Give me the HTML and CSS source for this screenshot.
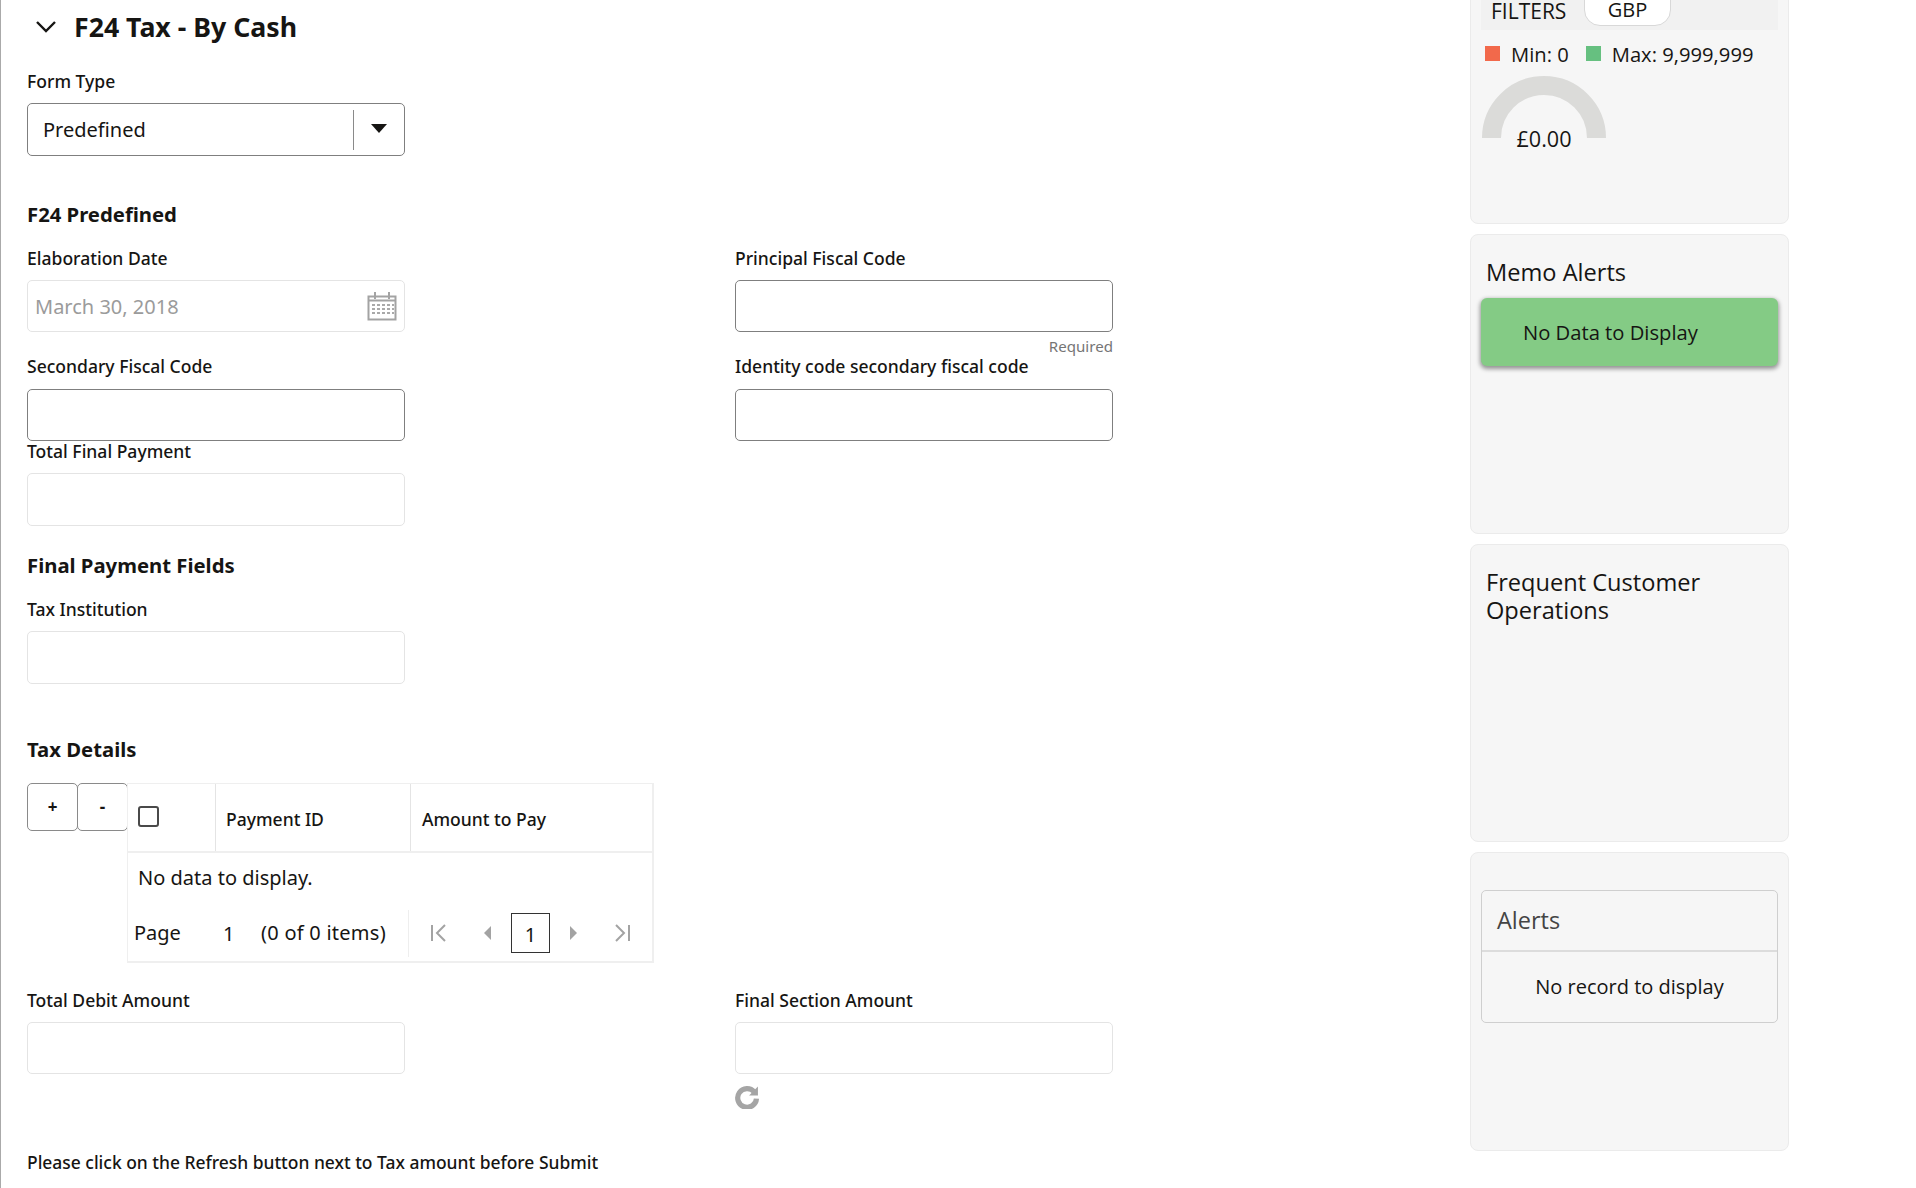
FILE: index.html
```html
<!DOCTYPE html>
<html lang="en">
<head>
<meta charset="utf-8">
<title>F24 Tax - By Cash</title>
<link rel="stylesheet" href="styles.css">
</head>
<body>
<div class="page">
  <main class="main">
    <header class="title-row">
      <svg class="chevron" viewBox="0 0 22 14"><polyline points="2,2 11,11 20,2"/></svg>
      <h1 class="title">F24 Tax - By Cash</h1>
    </header>

    <div class="field single form-type">
      <label class="label">Form Type</label>
      <div class="input tall strong select">
        <span class="select-value">Predefined</span>
        <span class="select-btn"><svg viewBox="0 0 16 9" class="caret"><polygon points="0,0 16,0 8,9"/></svg></span>
      </div>
    </div>

    <h2 class="section predefined">F24 Predefined</h2>
    <div class="grid">
      <div class="field">
        <label class="label">Elaboration Date</label>
        <div class="input soft date">
          <span class="date-value">March 30, 2018</span>
          <svg class="calendar" viewBox="0 0 30 30">
            <path class="cal-line" d="M1.5 5.5h27v23h-27z"/>
            <path class="cal-line" d="M1.5 9.5h27M8 1v7M22 1v7"/>
            <path class="cal-dots" d="M5 13h3v2H5zM10 13h3v2h-3zM15 13h3v2h-3zM20 13h3v2h-3zM25 13h2v2h-2zM5 17h3v2H5zM10 17h3v2h-3zM15 17h3v2h-3zM20 17h3v2h-3zM25 17h2v2h-2zM5 21h3v2H5zM10 21h3v2h-3zM15 21h3v2h-3zM20 21h3v2h-3zM25 21h2v2h-2z"/>
          </svg>
        </div>
      </div>
      <div class="field">
        <label class="label">Principal Fiscal Code</label>
        <div class="input strong"></div>
        <div class="required">Required</div>
      </div>
      <div class="field tight">
        <label class="label">Secondary Fiscal Code</label>
        <div class="input strong"></div>
      </div>
      <div class="field tight">
        <label class="label">Identity code secondary fiscal code</label>
        <div class="input strong"></div>
      </div>
      <div class="field">
        <label class="label">Total Final Payment</label>
        <div class="input tall soft"></div>
      </div>
    </div>

    <h2 class="section final">Final Payment Fields</h2>
    <div class="field single">
      <label class="label">Tax Institution</label>
      <div class="input tall soft"></div>
    </div>

    <h2 class="section details">Tax Details</h2>
    <div class="table-wrap">
      <div class="table-actions">
        <button class="act-btn" type="button">+</button>
        <button class="act-btn" type="button">-</button>
      </div>
      <div class="table">
        <div class="thead">
          <div class="th th-check"><span class="checkbox"></span></div>
          <div class="th th-id">Payment ID</div>
          <div class="th th-amount">Amount to Pay</div>
        </div>
        <div class="no-data">No data to display.</div>
        <div class="pager">
          <div class="pager-info">
            <span class="pg-label">Page</span>
            <span class="pg-num">1</span>
            <span class="pg-items">(0 of 0 items)</span>
          </div>
          <div class="pager-nav">
            <svg class="pg-icon" viewBox="0 0 20 20"><path class="pg-stroke" d="M3 2v16M16 2 8 10l8 8"/></svg>
            <svg class="pg-icon" viewBox="0 0 20 20"><polygon class="pg-fill" points="13,3 13,17 6,10"/></svg>
            <span class="pg-box">1</span>
            <svg class="pg-icon" viewBox="0 0 20 20"><polygon class="pg-fill" points="7,3 7,17 14,10"/></svg>
            <svg class="pg-icon" viewBox="0 0 20 20"><path class="pg-stroke" d="M4 2l8 8-8 8M17 2v16"/></svg>
          </div>
        </div>
      </div>
    </div>

    <div class="grid totals">
      <div class="field">
        <label class="label">Total Debit Amount</label>
        <div class="input soft"></div>
      </div>
      <div class="field">
        <label class="label">Final Section Amount</label>
        <div class="input soft"></div>
        <svg class="refresh" viewBox="0 0 24 24"><path d="M18.5 7.6A9 9 0 1 0 20.6 14" class="refresh-arc"/><polygon class="refresh-head" points="22,2.5 22,11 13.5,11"/></svg>
      </div>
    </div>

    <p class="note">Please click on the Refresh button next to Tax amount before Submit</p>
  </main>

  <aside class="side">
    <section class="card card-limits">
      <div class="filters">
        <span class="filters-label">FILTERS</span>
        <span class="pill">GBP</span>
      </div>
      <div class="legend">
        <span class="swatch swatch-min"></span><span class="legend-min">Min: 0</span>
        <span class="swatch swatch-max"></span><span class="legend-max">Max: 9,999,999</span>
      </div>
      <div class="gauge">
        <svg class="gauge-arc" viewBox="0 0 124 62"><path d="M9.5 62a52.5 52.5 0 0 1 105 0"/></svg>
        <span class="gauge-value">£0.00</span>
      </div>
    </section>

    <section class="card card-memo">
      <h3 class="card-title">Memo Alerts</h3>
      <div class="memo-box">No Data to Display</div>
    </section>

    <section class="card card-freq">
      <h3 class="card-title">Frequent Customer Operations</h3>
    </section>

    <section class="card card-alerts">
      <div class="alerts-box">
        <div class="alerts-head">Alerts</div>
        <div class="alerts-body">No record to display</div>
      </div>
    </section>
  </aside>
</div>
</body>
</html>
```
FILE: styles.css
```css
* { box-sizing: border-box; }
html, body { margin: 0; padding: 0; background: #fff; }
body { font-family: "Noto Sans", "Open Sans", sans-serif; color: #161513; }
.page { display: flex; width: 1916px; height: 1188px; overflow: hidden; }

.main { width: 1470px; flex: none; border-left: 1px solid #aaa; padding-left: 26px; }
.title-row { display: flex; align-items: center; height: 53px; }
.chevron { width: 22px; height: 14px; margin-left: 8px; margin-right: 17px; fill: none; stroke: #161513; stroke-width: 2.4; }
.title { margin: 0; font-size: 26.7px; font-weight: 700; line-height: 53px; }

.label { display: block; height: 22px; line-height: 22px; margin-bottom: 11px; font-size: 17.55px; font-weight: 500; }
.field.single { width: 378px; }
.form-type { margin-top: 17px; }
.tight { margin-bottom: -1px; }
.tight .label { margin-bottom: 12px; }

.input { height: 52px; border-radius: 5px; background: #fff; }
.input.tall { height: 53px; }
.strong { border: 1px solid #7f7f7f; }
.soft { border: 1px solid #e4e4e4; }

.select { display: flex; align-items: center; }
.select-value { flex: 1; padding-left: 15px; font-size: 20px; }
.select-btn { width: 51px; height: 40px; border-left: 1px solid #8a8a8a; display: flex; align-items: center; justify-content: center; }
.caret { width: 16px; height: 9px; fill: #161513; margin-bottom: 2px; }

.section { margin: 0; height: 30px; line-height: 30px; font-size: 20.3px; font-weight: 700; }
.predefined { margin-top: 43px; margin-bottom: 18px; }
.final { margin-top: 24px; margin-bottom: 18px; }
.details { margin-top: 50px; margin-bottom: 19px; }

.grid { display: grid; grid-template-columns: 378px 378px; column-gap: 330px; }
.required { height: 23px; padding-top: 2px; line-height: 24px; text-align: right; font-size: 15.1px; color: #757575; }

.date { display: flex; align-items: center; justify-content: space-between; padding: 0 7px 0 7px; }
.date-value { font-size: 20px; color: #9b9b9b; }
.calendar { width: 30px; height: 30px; margin-top: -1px; }
.cal-line { fill: none; stroke: #a3a3a3; stroke-width: 2; }
.cal-dots { fill: #a9a9a9; }

.table-wrap { display: flex; height: 180px; }
.table-actions { display: flex; align-items: flex-start; }
.act-btn { width: 51px; height: 48px; margin-right: -1px; padding: 0 0 2px; border: 1px solid #8a8a8a; border-radius: 5px; background: #fff; font: 700 17px "Noto Sans", sans-serif; color: #161513; }
.table { width: 527px; border: 2px solid #efefef; border-top-width: 1px; border-left-width: 1px; }
.thead { display: flex; height: 69px; border-bottom: 2px solid #efefef; }
.th { display: flex; align-items: center; font-size: 17.55px; font-weight: 500; padding-left: 10px; padding-top: 2px; }
.th-check { width: 88px; border-right: 1px solid #e4e4e4; padding-left: 10px; padding-top: 0; padding-bottom: 2px; }
.th-id { width: 195px; border-right: 1px solid #e4e4e4; }
.th-amount { flex: 1; padding-left: 11px; }
.checkbox { width: 21px; height: 21px; border: 2px solid #4a4a4a; border-radius: 3px; }
.no-data { height: 49px; line-height: 49px; padding-left: 10px; font-size: 20px; }
.pager { display: flex; height: 58px; padding-top: 4px; align-items: center; }
.pager-info { flex: none; width: 281px; height: 47px; display: flex; align-items: center; padding-left: 6px; padding-bottom: 2px; font-size: 20px; border-right: 1px solid #eee; }
.pg-label { width: 89px; }
.pg-num { width: 38px; padding-top: 3px; }
.pg-items { letter-spacing: .25px; }
.pager-nav { flex: 1; display: flex; align-items: center; padding-left: 20px; }
.pg-icon { width: 20px; height: 20px; margin-right: 29px; }
.pg-icon:nth-of-type(2) { margin-right: 13px; }
.pg-icon:nth-of-type(3) { margin-left: 13px; }
.pg-icon:last-child { margin-right: 0; }
.pg-stroke { fill: none; stroke: #a3a3a3; stroke-width: 2; }
.pg-fill { fill: #a3a3a3; }
.pg-box { width: 39px; height: 40px; border: 1.5px solid #333; display: flex; align-items: center; justify-content: center; font-size: 20px; padding-top: 2px; }

.totals { margin-top: 26px; }
.refresh { display: block; width: 25px; height: 25px; margin-top: 10px; }
.refresh-arc { fill: none; stroke: #a5a5a5; stroke-width: 5; }
.refresh-head { fill: #a5a5a5; }
.note { margin: 41px 0 0; font-size: 17.45px; font-weight: 500; line-height: 24px; }

.side { width: 319px; flex: none; margin-top: -26px; display: flex; flex-direction: column; gap: 10px; }
.card { background: #f6f6f6; border: 1px solid #ebebeb; border-radius: 8px; padding: 0 10px; flex: none; }
.card-limits { height: 250px; }
.card-memo { height: 300px; }
.card-freq { height: 298px; }
.card-alerts { height: 299px; }
.card-title { margin: 0 -1px; padding: 23px 6px 0; font-size: 23.6px; font-weight: 500; line-height: 28px; font-family: "Open Sans", sans-serif; }

.filters { height: 55px; background: #f1f1f1; display: flex; align-items: flex-end; padding-left: 10px; }
.filters-label { font: 400 21px/20px "Open Sans", sans-serif; margin-bottom: 9px; width: 93px; }
.pill { width: 87px; height: 52px; margin-bottom: 4px; padding-bottom: 5px; background: #fff; border: 1px solid #d8d8d8; border-radius: 0 0 16px 16px; display: flex; align-items: flex-end; justify-content: center; font: 400 20px/20px "Open Sans", sans-serif; }
.legend { display: flex; align-items: center; height: 30px; margin-top: 9px; padding-left: 4px; font: 400 20.2px/30px "Open Sans", sans-serif; }
.swatch { width: 15px; height: 15px; margin-top: -2px; }
.swatch-min { background: #f2694b; margin-right: 11px; }
.swatch-max { background: #66c080; margin-right: 11px; margin-left: 17px; }
.gauge { position: relative; width: 124px; height: 90px; margin-top: 7px; margin-left: 1px; }
.gauge-arc { display: block; width: 124px; height: 62px; fill: none; stroke: #dbdbd9; stroke-width: 19; }
.gauge-value { position: absolute; left: 0; right: 0; top: 48px; text-align: center; font: 400 21.6px/30px "Open Sans", sans-serif; }

.memo-box { height: 68px; margin-top: 12px; background: #84cb85; border-radius: 6px; box-shadow: 0 2px 4px 1px rgba(0,0,0,.4); padding-left: 42px; font: 400 20.2px/68px "Open Sans", sans-serif; }

.alerts-box { margin-top: 37px; height: 133px; border: 1px solid #cfcfcf; border-radius: 5px; }
.alerts-head { height: 61px; border-bottom: 2px solid #dcdcdc; padding-left: 15px; font: 400 23.5px/59px "Open Sans", sans-serif; color: #444; }
.alerts-body { height: 70px; text-align: center; font: 400 20px/70px "Open Sans", sans-serif; }
```
